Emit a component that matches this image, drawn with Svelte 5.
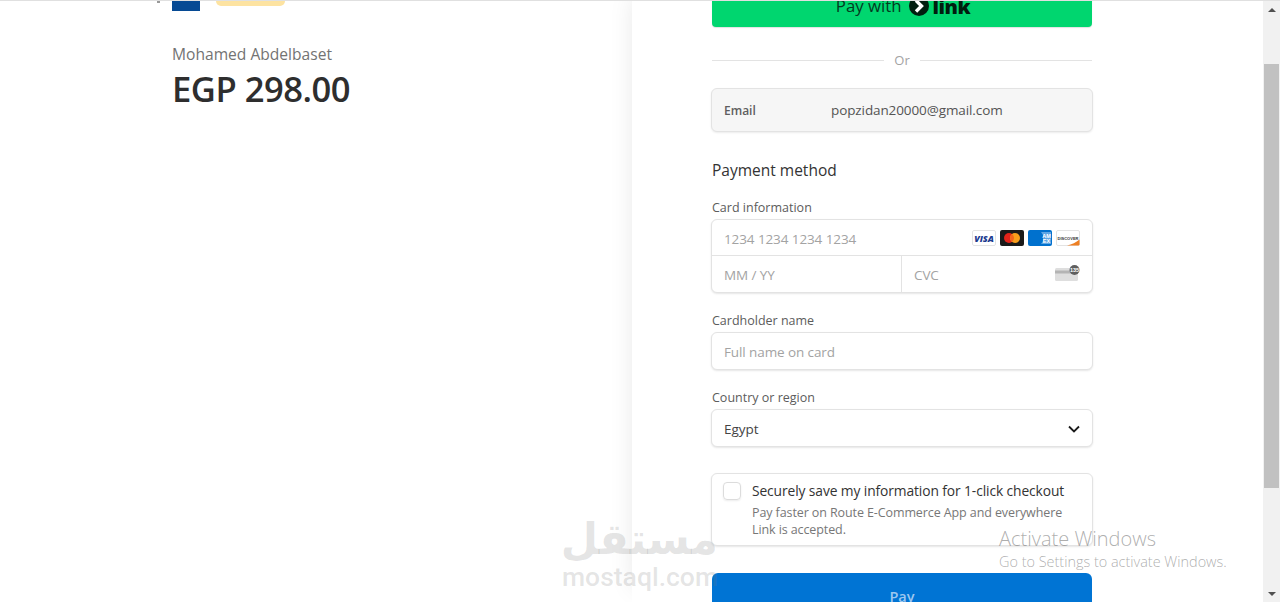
<script>
  const brands = ['visa', 'mastercard', 'amex', 'discover'];
</script>

<div class="screen">
  <div class="page">
    <section class="summary">
      <div class="head-row">
        <span class="back"></span>
        <span class="flag"></span>
        <span class="badge"></span>
      </div>
      <div class="merchant">Mohamed Abdelbaset</div>
      <div class="amount">EGP 298.00</div>
    </section>

    <section class="checkout">
      <button class="link-btn">
        <span class="pay-with">Pay with</span>
        <svg width="20" height="20" viewBox="0 0 20 20">
          <circle cx="10" cy="10" r="10" fill="#011e0f" />
          <path d="M7 4.500 12.500 10 7 15.500" fill="none" stroke="#fff" stroke-width="3.400" />
        </svg>
        <b>link</b>
      </button>

      <div class="or"><i></i><span>Or</span><i></i></div>

      <div class="email">
        <span class="email-label">Email</span>
        <span class="email-value">popzidan20000@gmail.com</span>
      </div>

      <h2>Payment method</h2>

      <div class="label first">Card information</div>
      <div class="card-box">
        <div class="card-row">
          <span class="ph">1234 1234 1234 1234</span>
          <span class="brands">
            {#each brands as b}
              <svg width="24" height="16" viewBox="0 0 24 16">
                {#if b === 'visa'}
                  <rect x=".5" y=".5" width="23" height="15" rx="1.500" fill="#fff" stroke="#e3e3e3" />
                  <text x="12" y="11.500" text-anchor="middle" class="visa-t">VISA</text>
                {:else if b === 'mastercard'}
                  <rect width="24" height="16" rx="2" fill="#1a1a1a" />
                  <circle cx="9" cy="8" r="5" fill="#e2231a" />
                  <circle cx="15" cy="8" r="5" fill="#f79e1b" />
                  <path d="M12 4a5 5 0 0 1 0 8 5 5 0 0 1 0-8z" fill="#f0651c" />
                {:else if b === 'amex'}
                  <rect width="24" height="16" rx="2" fill="#0071ce" />
                  <path d="M13 2h10v12h-10l2-3v-6z" fill="#5ea6e4" />
                  <text x="18.500" y="7.500" text-anchor="middle" class="amex-t">AM</text>
                  <text x="18.500" y="13" text-anchor="middle" class="amex-t">EX</text>
                {:else}
                  <rect x=".5" y=".5" width="23" height="15" rx="1.500" fill="#fff" stroke="#e3e3e3" />
                  <path d="M11 15.500c5-1 9-3 12.500-6v5a1 1 0 0 1-1 1z" fill="#ee7f22" />
                  <text x="12" y="9.500" text-anchor="middle" class="disc-t">DISCOVER</text>
                {/if}
              </svg>
            {/each}
          </span>
        </div>
        <div class="card-split">
          <div class="exp"><span class="ph">MM / YY</span></div>
          <div class="cvc">
            <span class="ph">CVC</span>
            <svg width="25" height="16" viewBox="0 0 25 16">
              <rect x="0" y="3" width="23" height="13" rx="1.500" fill="#dedede" />
              <rect x="0" y="5.500" width="23" height="3" fill="#b4b4b4" />
              <circle cx="19.500" cy="5" r="5" fill="#5f5f5f" />
              <text x="19.500" y="7" text-anchor="middle" class="cvc-t">135</text>
            </svg>
          </div>
        </div>
      </div>

      <div class="label">Cardholder name</div>
      <div class="input"><span class="ph">Full name on card</span></div>

      <div class="label">Country or region</div>
      <div class="input select">
        <span class="val">Egypt</span>
        <svg width="12" height="8" viewBox="0 0 12 8">
          <path d="M1 1.500 6 6.500 11 1.500" fill="none" stroke="#1a1a1a" stroke-width="1.800" />
        </svg>
      </div>

      <div class="save">
        <span class="check"></span>
        <div>
          <div class="save-title">Securely save my information for 1-click checkout</div>
          <div class="save-text">Pay faster on Route E-Commerce App and everywhere Link is accepted.</div>
        </div>
      </div>

      <button class="pay">Pay</button>
    </section>
  </div>

  <div class="scrollbar">
    <span class="arrow up"></span>
    <span class="thumb"></span>
    <span class="arrow down"></span>
  </div>

  <div class="mostaql">
    <div class="mostaql-ar" dir="rtl">مستقل</div>
    <div class="mostaql-en">mostaql.com</div>
  </div>

  <div class="activate">
    <div class="activate-title">Activate Windows</div>
    <div class="activate-sub">Go to Settings to activate Windows.</div>
  </div>
</div>

<style>
  :global(body) {
    margin: 0;
    background: #fff;
  }
  .screen {
    position: relative;
    display: flex;
    width: 1280px;
    height: 602px;
    overflow: hidden;
    border-top: 1px solid #e0e0e0;
    box-sizing: border-box;
    font-family: "Open Sans", "Noto Sans", sans-serif;
    color: #333;
  }
  .page {
    flex: 1;
    display: flex;
    min-width: 0;
  }
  .summary {
    width: 632px;
    flex: none;
    box-sizing: border-box;
    padding-left: 172px;
  }
  .head-row {
    display: flex;
    align-items: flex-start;
    height: 43px;
  }
  .back {
    width: 3px;
    height: 2px;
    margin-left: -15px;
    margin-right: 12px;
    background: #999;
  }
  .flag {
    width: 28px;
    height: 10px;
    background: #064a94;
  }
  .badge {
    width: 69px;
    height: 5px;
    margin-left: 16px;
    background: #fde3a1;
    border-radius: 0 0 5px 5px;
  }
  .merchant {
    font-size: 15.600px;
    line-height: 20px;
    font-weight: 500;
    color: #737373;
  }
  .amount {
    margin-top: 3px;
    font-size: 34.600px;
    line-height: 44px;
    font-weight: 600;
    letter-spacing: -0.5px;
    color: #2e2e2e;
  }
  .checkout {
    width: 631px;
    box-sizing: border-box;
    padding-left: 80px;
    padding-right: 171px;
    box-shadow: -12px 0 24px -14px rgba(0, 0, 0, 0.1);
    margin-top: -18px;
  }
  .link-btn {
    display: flex;
    align-items: center;
    justify-content: center;
    gap: 7px;
    width: 100%;
    height: 44px;
    padding: 0 0 0 2px;
    border: 0;
    border-radius: 4px;
    background: #00d66f;
    color: #043a1f;
    font: inherit;
    box-shadow: 0 1px 1px rgba(0, 0, 0, 0.12);
  }
  .pay-with {
    padding-top: 2px;
    font-size: 16.800px;
    line-height: 20px;
  }
  .link-btn svg {
    margin-top: 1px;
  }
  .link-btn b {
    padding-top: 3px;
    margin-left: -3px;
    font-size: 20px;
    line-height: 20px;
    font-weight: 800;
    letter-spacing: -0.5px;
    color: #011e0f;
  }
  .or {
    display: flex;
    align-items: center;
    gap: 10px;
    height: 20px;
    margin-top: 23px;
    font-size: 13px;
    color: #a3a3a3;
  }
  .or i {
    flex: 1;
    height: 1px;
    background: #e3e3e3;
  }
  .email {
    display: flex;
    align-items: center;
    height: 44px;
    margin: 18px -1px 0;
    padding-left: 12px;
    box-sizing: border-box;
    border: 1px solid #e3e3e3;
    border-radius: 6px;
    background: #f6f6f6;
    box-shadow: 0 1px 2px rgba(0, 0, 0, 0.08);
  }
  .email-label {
    width: 107px;
    font-size: 12px;
    font-weight: 600;
    color: #5f5f5f;
  }
  .email-value {
    font-size: 13.500px;
    letter-spacing: -0.1px;
    color: #545454;
  }
  h2 {
    margin: 27px 0 0;
    font-size: 15.500px;
    line-height: 22px;
    font-weight: 500;
    color: #333;
  }
  .label {
    margin-top: 20px;
    margin-bottom: 3px;
    font-size: 12.500px;
    line-height: 16px;
    color: #5c5c5c;
  }
  .label.first {
    margin-top: 19px;
  }
  .ph {
    font-size: 13.500px;
    letter-spacing: -0.1px;
    color: #a3a3a3;
  }
  .card-box,
  .input,
  .save {
    box-sizing: border-box;
    margin-left: -1px;
    margin-right: -1px;
    background: #fff;
    border: 1px solid #e3e3e3;
    border-radius: 6px;
    box-shadow: 0 1px 2px rgba(0, 0, 0, 0.1);
  }
  .card-row {
    display: flex;
    align-items: center;
    justify-content: space-between;
    height: 36px;
    padding: 3px 12px 0;
    border-bottom: 1px solid #e3e3e3;
    box-sizing: border-box;
  }
  .brands {
    display: flex;
    gap: 4px;
    margin-top: -2px;
  }
  .brands svg {
    display: block;
  }
  .visa-t {
    font: italic 800 9px "Open Sans", sans-serif;
    fill: #1a3a8f;
  }
  .amex-t {
    font: 700 5.500px "Liberation Sans", sans-serif;
    fill: #fff;
  }
  .disc-t {
    font: 700 4px "Liberation Sans", sans-serif;
    fill: #333;
  }
  .cvc-t {
    font: 700 5.500px "Liberation Sans", sans-serif;
    fill: #fff;
  }
  .card-split {
    display: flex;
    height: 36px;
    padding-top: 1px;
    box-sizing: border-box;
  }
  .exp {
    display: flex;
    align-items: center;
    width: 190px;
    margin-top: -1px;
    padding: 1px 0 0 12px;
    box-sizing: border-box;
    border-right: 1px solid #e3e3e3;
  }
  .cvc {
    flex: 1;
    display: flex;
    align-items: center;
    justify-content: space-between;
    padding: 0 12px;
  }
  .cvc svg {
    margin-top: -4px;
  }
  .input {
    display: flex;
    align-items: center;
    height: 38px;
    padding: 1px 12px 0;
  }
  .select {
    justify-content: space-between;
  }
  .val {
    font-size: 13.500px;
    color: #444;
  }
  .save {
    display: flex;
    gap: 11px;
    height: 73px;
    margin-top: 26px;
    padding: 8px 11px;
  }
  .check {
    flex: none;
    width: 18px;
    height: 18px;
    box-sizing: border-box;
    border: 1px solid #dcdcdc;
    border-radius: 4px;
    box-shadow: 0 1px 2px rgba(0, 0, 0, 0.08);
  }
  .save-title {
    font-size: 13.800px;
    line-height: 18px;
    font-weight: 500;
    letter-spacing: -0.1px;
    color: #333;
  }
  .save-text {
    margin-top: 4px;
    font-size: 12.500px;
    line-height: 17px;
    letter-spacing: -0.1px;
    color: #777;
  }
  .pay {
    display: block;
    width: 100%;
    height: 46px;
    margin-top: 27px;
    padding: 0;
    border: 0;
    border-radius: 6px;
    background: #0074d4;
    color: #9cc7ef;
    font: inherit;
    font-size: 14.500px;
    font-weight: 600;
  }
  .scrollbar {
    flex: none;
    width: 17px;
    display: flex;
    flex-direction: column;
    align-items: center;
    background: #f1f1f1;
  }
  .arrow {
    width: 0;
    height: 0;
    border-left: 4px solid transparent;
    border-right: 4px solid transparent;
  }
  .arrow.up {
    margin-top: 7px;
    border-bottom: 4px solid #505050;
  }
  .arrow.down {
    margin-top: auto;
    margin-bottom: 6px;
    border-top: 4px solid #505050;
  }
  .thumb {
    width: 15px;
    height: 424px;
    margin-top: 52px;
    background: #c1c1c1;
  }
  .mostaql {
    position: absolute;
    left: 562px;
    top: 509px;
    width: 156px;
    color: rgba(120, 120, 120, 0.2);
    text-align: center;
  }
  .mostaql-ar {
    font: 700 43px/58px "DejaVu Sans", sans-serif;
    height: 54px;
  }
  .mostaql-en {
    font: 500 26.500px/26px "Roboto", sans-serif;
    white-space: nowrap;
  }
  .activate {
    position: absolute;
    left: 999px;
    top: 526px;
    color: rgba(120, 120, 120, 0.6);
    font-weight: 300;
  }
  .activate-title {
    font-size: 20px;
    line-height: 24px;
  }
  .activate-sub {
    font-size: 14.450px;
    line-height: 22px;
  }
</style>
